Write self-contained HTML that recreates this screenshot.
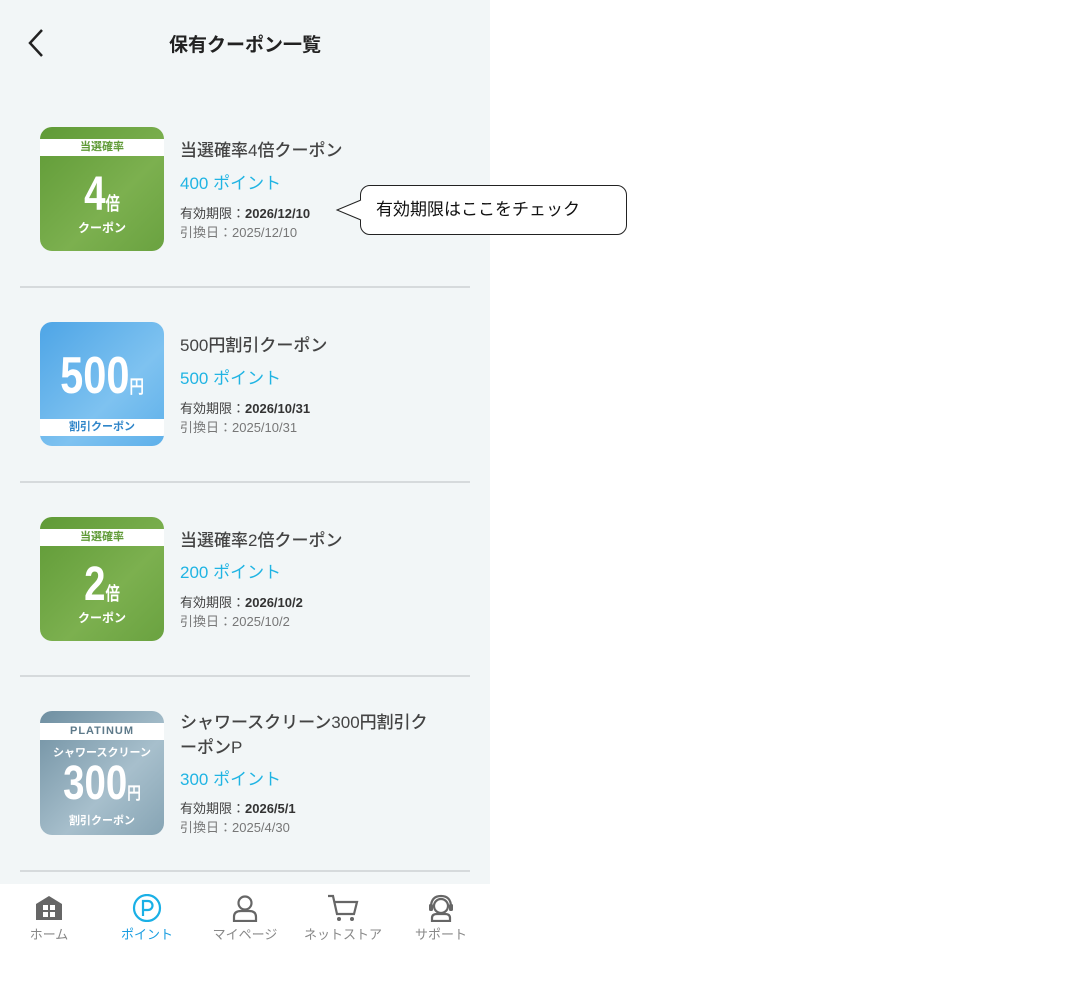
<!DOCTYPE html>
<html><head><meta charset="utf-8"><style>
*{margin:0;padding:0;box-sizing:border-box}
body{width:1079px;height:997px;background:#fff;font-family:"Liberation Sans","Noto Sans CJK JP",sans-serif;position:relative;overflow:hidden}
.panel{position:absolute;left:0;top:0;width:490px;height:997px;background:#f2f6f7}
.hdr{position:absolute;top:30px;left:0;width:490px;text-align:center;font-size:19px;font-weight:bold;color:#222}
.back{position:absolute;left:26px;top:28px}
.line{position:absolute;left:20px;width:450px;height:2px;background:#d6dadc}
.badge{position:absolute;left:40px;width:124px;height:124px;border-radius:12px;overflow:hidden;color:#fff;text-align:center}
.green{background:linear-gradient(135deg,#5f9a36,#7cb04f 60%,#6aa240)}
.blue{background:linear-gradient(135deg,#4ea5e6,#7ec2f0 60%,#5eb0ea)}
.plat{background:linear-gradient(135deg,#6f8fa1,#a7bfcc 60%,#86a4b4)}
.band{position:absolute;left:0;width:124px;height:17px;background:#fff;font-size:11px;font-weight:bold;line-height:17px}
.big{position:absolute;left:0;width:124px;font-weight:bold;font-family:"Liberation Sans Narrow","Liberation Sans",sans-serif;transform:scaleX(0.8);transform-origin:center}
.t1{position:absolute;left:180px;font-size:17px;color:#444;font-weight:500;line-height:25px}
.pt{position:absolute;left:180px;font-size:17px;color:#20b4e3}
.ex{position:absolute;left:180px;font-size:13px;color:#444}
.ex b{color:#333}
.is{position:absolute;left:180px;font-size:13px;color:#777}
.nav{position:absolute;left:0;top:884px;width:490px;height:113px;background:#fff}
.ni{position:absolute;top:10px;width:98px;text-align:center;font-size:13px;color:#888}
.ni svg{display:block;margin:0 auto 2px}
.call{position:absolute;left:360px;top:185px;width:267px;height:50px;border:1px solid #222;border-radius:10px;background:#fff;font-size:17px;line-height:48px;padding-left:15px;color:#111}
</style></head><body>
<div class="panel">
<svg class="back" width="20" height="30" viewBox="0 0 20 30"><path d="M16 2 L4 15 L16 28" fill="none" stroke="#222" stroke-width="2.5"/></svg>
<div class="hdr">保有クーポン一覧</div>

<div class="badge green" style="top:127px">
 <div class="band" style="top:12px;color:#5f9a36">当選確率</div>
 <div class="big" style="top:46px;font-size:48px;line-height:44px">4<span style="font-size:18px">倍</span></div>
 <div style="position:absolute;top:92px;width:124px;font-size:12px;font-weight:bold">クーポン</div>
</div>
<div class="t1" style="top:138px">当選確率4倍クーポン</div>
<div class="pt" style="top:169px">400 ポイント</div>
<div class="ex" style="top:203px">有効期限：<b>2026/12/10</b></div>
<div class="is" style="top:222px">引換日：2025/12/10</div>
<div class="line" style="top:286px"></div>

<div class="badge blue" style="top:322px">
 <div class="big" style="top:26px;font-size:52px;line-height:56px">500<span style="font-size:18px">円</span></div>
 <div class="band" style="top:97px;color:#2f85c9">割引クーポン</div>
</div>
<div class="t1" style="top:333px">500円割引クーポン</div>
<div class="pt" style="top:364px">500 ポイント</div>
<div class="ex" style="top:398px">有効期限：<b>2026/10/31</b></div>
<div class="is" style="top:417px">引換日：2025/10/31</div>
<div class="line" style="top:481px"></div>

<div class="badge green" style="top:517px">
 <div class="band" style="top:12px;color:#5f9a36">当選確率</div>
 <div class="big" style="top:46px;font-size:48px;line-height:44px">2<span style="font-size:18px">倍</span></div>
 <div style="position:absolute;top:92px;width:124px;font-size:12px;font-weight:bold">クーポン</div>
</div>
<div class="t1" style="top:528px">当選確率2倍クーポン</div>
<div class="pt" style="top:558px">200 ポイント</div>
<div class="ex" style="top:592px">有効期限：<b>2026/10/2</b></div>
<div class="is" style="top:611px">引換日：2025/10/2</div>
<div class="line" style="top:675px"></div>

<div class="badge plat" style="top:711px">
 <div class="band" style="top:12px;color:#5e7a8a;letter-spacing:1px">PLATINUM</div>
 <div style="position:absolute;top:33px;width:124px;font-size:11px;font-weight:bold">シャワースクリーン</div>
 <div class="big" style="top:47px;font-size:48px;line-height:52px">300<span style="font-size:17px">円</span></div>
 <div style="position:absolute;top:101px;width:124px;font-size:11px;font-weight:bold">割引クーポン</div>
</div>
<div class="t1" style="top:710px">シャワースクリーン300円割引ク<br>ーポンP</div>
<div class="pt" style="top:765px">300 ポイント</div>
<div class="ex" style="top:798px">有効期限：<b>2026/5/1</b></div>
<div class="is" style="top:817px">引換日：2025/4/30</div>
<div class="line" style="top:870px"></div>

<div class="nav">
 <div class="ni" style="left:0">
  <svg width="30" height="28" viewBox="0 0 30 28"><path d="M15 2 L28 10 V26 H2 V10 Z" fill="#666"/><rect x="9" y="11" width="5" height="5" fill="#fff"/><rect x="16" y="11" width="5" height="5" fill="#fff"/><rect x="9" y="18" width="5" height="5" fill="#fff"/><rect x="16" y="18" width="5" height="5" fill="#fff"/></svg>ホーム</div>
 <div class="ni" style="left:98px;color:#1a9de0">
  <svg width="30" height="28" viewBox="0 0 30 28"><circle cx="15" cy="14" r="13" fill="none" stroke="#1ab0e6" stroke-width="2.2"/><path d="M11 22 V7 H16 A4.5 4.5 0 0 1 16 16 H11" fill="none" stroke="#1ab0e6" stroke-width="2.2"/></svg>ポイント</div>
 <div class="ni" style="left:196px">
  <svg width="30" height="28" viewBox="0 0 30 28"><circle cx="15" cy="9" r="6.5" fill="none" stroke="#666" stroke-width="2.2"/><path d="M4 27 V23 Q4 17 11 17 H19 Q26 17 26 23 V27 Z" fill="none" stroke="#666" stroke-width="2.2"/></svg>マイページ</div>
 <div class="ni" style="left:294px">
  <svg width="34" height="28" viewBox="0 0 34 28"><path d="M2 2 H7 L11 20 H28 L31 8 H8" fill="none" stroke="#666" stroke-width="2.2"/><circle cx="13" cy="25" r="2" fill="#666"/><circle cx="26" cy="25" r="2" fill="#666"/></svg>ネットストア</div>
 <div class="ni" style="left:392px">
  <svg width="30" height="28" viewBox="0 0 30 28"><circle cx="15" cy="12" r="7" fill="none" stroke="#666" stroke-width="2.2"/><path d="M5 13 Q5 2 15 2 Q25 2 25 13" fill="none" stroke="#666" stroke-width="2.2"/><rect x="3" y="10" width="4" height="7" rx="1.5" fill="#666"/><rect x="23" y="10" width="4" height="7" rx="1.5" fill="#666"/><path d="M6 27 V24 Q6 20 11 20 H19 Q24 20 24 24 V27 Z" fill="none" stroke="#666" stroke-width="2.2"/></svg>サポート</div>
</div>
</div>

<div class="call">有効期限はここをチェック</div>
<svg style="position:absolute;left:335px;top:198px" width="27" height="24" viewBox="0 0 27 24"><path d="M26 2 L2 12 L26 22" fill="#fff" stroke="#222" stroke-width="1"/><rect x="25.5" y="2.5" width="2" height="19" fill="#fff"/></svg>
</body></html>
